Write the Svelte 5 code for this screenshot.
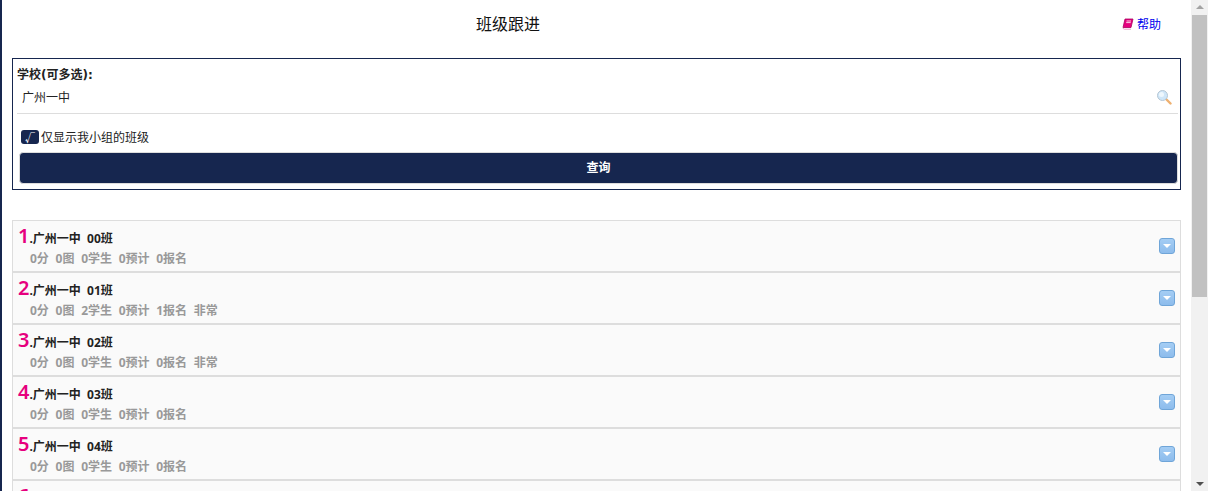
<script lang="ts">
    const classes = [
        { name: '00班', students: 0, signed: 0, note: '' },
        { name: '01班', students: 2, signed: 1, note: '非常' },
        { name: '02班', students: 0, signed: 0, note: '非常' },
        { name: '03班', students: 0, signed: 0, note: '' },
        { name: '04班', students: 0, signed: 0, note: '' },
        { name: '05班', students: 0, signed: 0, note: '' }
    ];
</script>

<div class="page">
    <div class="stripe"></div>
    <main>
        <header>
            <h1>班级跟进</h1>
            <a href="#help" class="help">
                <svg width="12" height="12" viewBox="0 0 12 12">
                    <path d="M3 1h8L9 9.5H1z" fill="#e6007e" stroke="#a80060" stroke-width="0.8" />
                    <path d="M1 9.8q.2 1.4 1.4 1.4H9" fill="none" stroke="#e8a0c8" stroke-width="1" />
                    <path d="M4.5 3h4.5M4.2 4.6h4.5" stroke="#fff" stroke-width="0.8" />
                </svg>
                帮助
            </a>
        </header>

        <form class="filter">
            <div class="label">学校(可多选):</div>
            <div class="search">
                <span>广州一中</span>
                <svg width="16" height="16" viewBox="0 0 16 16">
                    <path d="M10 10l4.5 4.5" stroke="#eeb070" stroke-width="2.4" stroke-linecap="round" />
                    <circle cx="6.5" cy="6.5" r="5" fill="#cfe6f8" stroke="#b5c6d4" />
                    <circle cx="5.5" cy="5.5" r="2.5" fill="#eef7fd" />
                </svg>
            </div>
            <div class="check">
                <span class="box">√</span>
                <span>仅显示我小组的班级</span>
            </div>
            <button type="button">查询</button>
        </form>

        <ul>
            {#each classes as item, i}
                <li>
                    <div class="info">
                        <div class="title"><b>{i + 1}</b>.广州一中&nbsp; {item.name}</div>
                        <div class="meta">
                            <span>0分</span>
                            <span>0图</span>
                            <span>{item.students}学生</span>
                            <span>0预计</span>
                            <span>{item.signed}报名</span>
                            {#if item.note}<span>{item.note}</span>{/if}
                        </div>
                    </div>
                    <span class="toggle"></span>
                </li>
            {/each}
        </ul>
    </main>
    <div class="scrollbar">
        <span class="up"></span>
        <span class="thumb"></span>
        <span class="down"></span>
    </div>
</div>

<style>
    :global(body) {
        margin: 0;
        background: #fff;
    }

    .page {
        display: flex;
        height: 491px;
        overflow: hidden;
        font-family: "Noto Sans", "Noto Sans CJK SC", sans-serif;
        font-size: 12px;
        color: #222;
    }

    .stripe {
        width: 2px;
        background: #16264f;
    }

    main {
        flex: 1;
        padding: 0 10px;
        overflow: hidden;
    }

    header {
        display: flex;
        align-items: center;
        justify-content: space-between;
        box-sizing: border-box;
        height: 48px;
        padding-bottom: 1px;
        margin-bottom: 10px;
    }

    h1 {
        flex: 1;
        margin: 0 0 2px;
        padding-right: 118px;
        font-size: 16px;
        font-weight: 400;
        text-align: center;
        color: #111;
    }

    .help {
        display: flex;
        align-items: center;
        gap: 3px;
        margin-right: 20px;
        color: #0000ee;
        text-decoration: none;
    }

    .filter {
        display: block;
        height: 130px;
        border: 1px solid #16264f;
        padding: 0 2px 0 4px;
    }

    .label {
        margin-top: 9px;
        height: 15px;
        line-height: 15px;
        font-family: "DejaVu Sans", "Noto Sans CJK SC", sans-serif;
        font-weight: 700;
    }

    .search {
        display: flex;
        align-items: center;
        justify-content: space-between;
        height: 28px;
        padding: 0 6px 2px 5px;
        border-bottom: 1px solid #ddd;
    }

    .check {
        display: flex;
        align-items: center;
        gap: 2px;
        height: 16px;
        margin: 15px 0 7px 4px;
    }

    .box {
        display: flex;
        align-items: center;
        justify-content: center;
        width: 18px;
        height: 14px;
        border-radius: 3px;
        background: #16264f;
        color: #fff;
        font-size: 10px;
        font-weight: 700;
    }

    button {
        display: block;
        width: 1159px;
        height: 32px;
        margin-left: 2px;
        padding-bottom: 3px;
        border: 1px solid #ddd;
        border-radius: 4px;
        background: #16264f;
        color: #fff;
        font: inherit;
        font-weight: 700;
    }

    ul {
        list-style: none;
        margin: 30px 0 0;
        padding: 0;
    }

    li {
        display: flex;
        align-items: center;
        justify-content: space-between;
        box-sizing: border-box;
        height: 52px;
        padding: 0 5px;
        border: 1px solid #ddd;
        background: #fafafa;
    }

    .info {
        margin-top: 2px;
    }

    .title {
        display: flex;
        align-items: baseline;
        height: 23px;
        line-height: 23px;
        font-weight: 700;
        white-space: pre;
        margin-top: -2px;
    }

    .title b {
        font-size: 20px;
        font-weight: 600;
        color: #e6007e;
    }

    .meta {
        display: flex;
        gap: 6.7px;
        height: 18px;
        line-height: 18px;
        margin-top: 3px;
        padding-left: 12px;
        font-weight: 700;
        color: #999;
    }

    .toggle {
        position: relative;
        width: 14px;
        height: 14px;
        border: 1px solid #6fa5d8;
        border-radius: 3px;
        background: linear-gradient(#a4cdf4, #8dbcec);
    }

    .toggle::after {
        content: "";
        position: absolute;
        left: 3px;
        top: 5px;
        border: 4px solid transparent;
        border-top: 4px solid #fff;
        border-bottom: 0;
    }

    .scrollbar {
        position: relative;
        width: 17px;
        background: #f1f1f1;
    }

    .thumb {
        position: absolute;
        top: 15px;
        left: 1px;
        width: 15px;
        height: 282px;
        background: #c1c1c1;
    }

    .up,
    .down {
        position: absolute;
        left: 5px;
        border: 4px solid transparent;
    }

    .up {
        top: 1px;
        border-bottom: 4px solid #a3a3a3;
    }

    .down {
        bottom: 1px;
        border-top: 4px solid #505050;
    }
</style>
